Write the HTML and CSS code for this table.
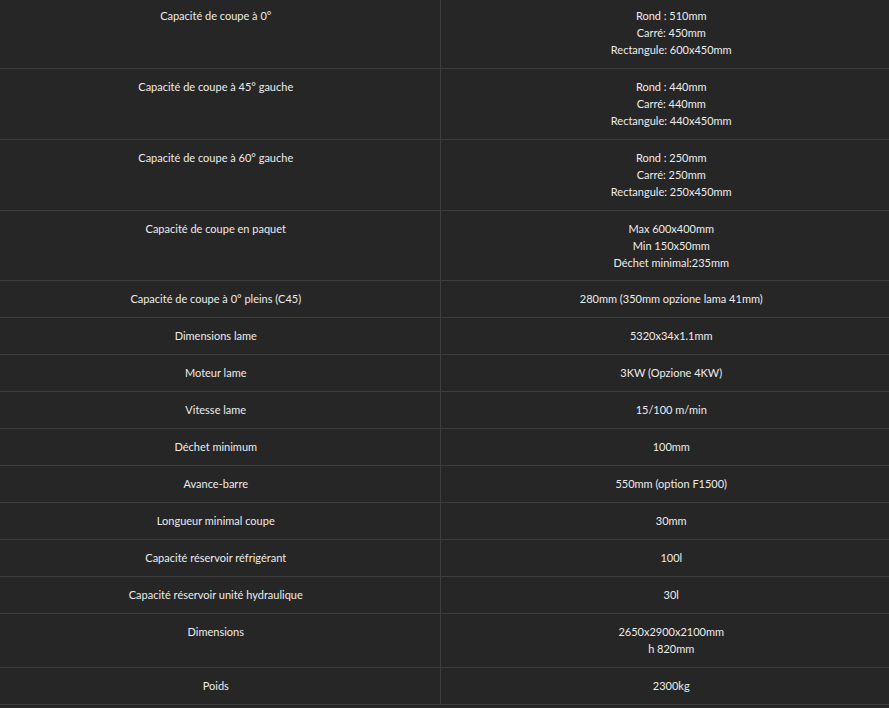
FILE: index.html
```html
<!DOCTYPE html>
<html lang="fr">
<head>
<meta charset="utf-8">
<title>Caractéristiques techniques</title>
<link rel="stylesheet" href="styles.css">
</head>
<body>
<table class="specs">
  <colgroup><col class="col-label"><col class="col-value"></colgroup>
  <tbody>
    <tr><td>Capacité de coupe à 0°</td><td>Rond : 510mm<br>Carré: 450mm<br>Rectangule: 600x450mm</td></tr>
    <tr><td>Capacité de coupe à 45° gauche</td><td>Rond : 440mm<br>Carré: 440mm<br>Rectangule: 440x450mm</td></tr>
    <tr><td>Capacité de coupe à 60° gauche</td><td>Rond : 250mm<br>Carré: 250mm<br>Rectangule: 250x450mm</td></tr>
    <tr class="row-tight"><td>Capacité de coupe en paquet</td><td>Max 600x400mm<br>Min 150x50mm<br>Déchet minimal:235mm</td></tr>
    <tr><td>Capacité de coupe à 0° pleins (C45)</td><td>280mm (350mm opzione lama 41mm)</td></tr>
    <tr><td>Dimensions lame</td><td>5320x34x1.1mm</td></tr>
    <tr><td>Moteur lame</td><td>3KW (Opzione 4KW)</td></tr>
    <tr><td>Vitesse lame</td><td>15/100 m/min</td></tr>
    <tr><td>Déchet minimum</td><td>100mm</td></tr>
    <tr><td>Avance-barre</td><td>550mm (option F1500)</td></tr>
    <tr><td>Longueur minimal coupe</td><td>30mm</td></tr>
    <tr><td>Capacité réservoir réfrigérant</td><td>100l</td></tr>
    <tr><td>Capacité réservoir unité hydraulique</td><td>30l</td></tr>
    <tr><td>Dimensions</td><td>2650x2900x2100mm<br>h 820mm</td></tr>
    <tr><td>Poids</td><td>2300kg</td></tr>
  </tbody>
</table>
</body>
</html>
```

FILE: styles.css
```css
html, body {
  margin: 0;
  padding: 0;
  background: #262626;
  overflow: hidden;
}

body {
  font-family: Lato, "Open Sans", sans-serif;
  font-size: 11px;
  line-height: 17px;
  color: #ececec;
}

.specs {
  border-collapse: collapse;
  table-layout: fixed;
  width: 910px;
  margin: -2px 0 0 -8px;
}

.col-label {
  width: 448px;
}

.specs td {
  padding: 9px 10px 10px;
  text-align: center;
  vertical-align: top;
  border-bottom: 1px solid #3e3e3e;
}

.specs td:first-child {
  border-right: 1px solid #3e3e3e;
}

.specs .row-tight td {
  padding-bottom: 9px;
}
```
